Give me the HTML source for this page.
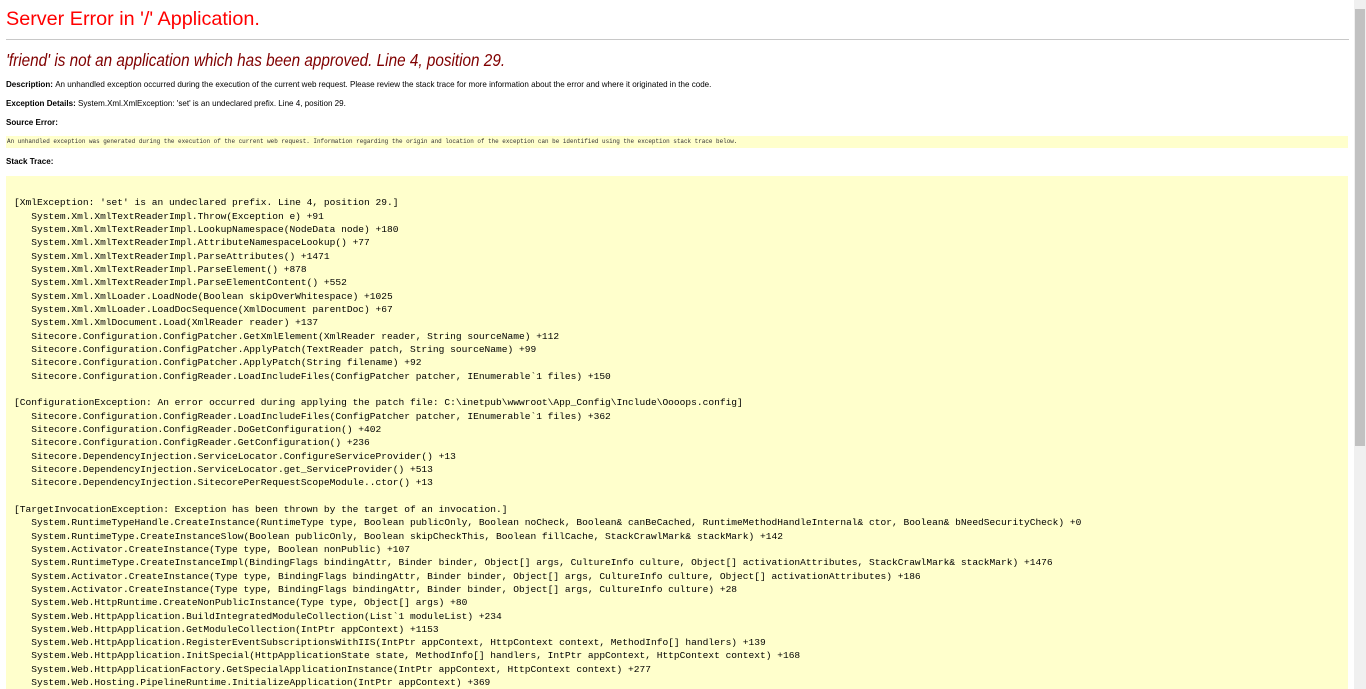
<!DOCTYPE html>
<html><head><meta charset="utf-8"><style>
html,body{margin:0;padding:0;background:#fff;overflow:hidden}
body{width:1366px;height:689px;position:relative;font-family:"Liberation Sans",Arial,sans-serif;color:#000}
.a{position:absolute;white-space:nowrap}
h1{position:absolute;left:6px;top:8px;margin:0;font-weight:normal;font-size:19.8px;color:#f00}
hr{position:absolute;left:6px;top:39px;width:1343px;margin:0;border:0;border-top:1px solid #c8c8c8}
h2{position:absolute;left:6px;top:51px;margin:0;font-weight:normal;font-style:italic;font-size:15.3px;color:#800000;transform:scaleY(1.15);transform-origin:0 0;white-space:nowrap}
.s{font-size:8.05px}
.src{position:absolute;left:6px;top:136px;width:1342px;height:12px;background:#ffffcc;font-family:"Liberation Mono",monospace;font-size:5.94px;line-height:12px;white-space:nowrap;color:#333;padding-left:1px;box-sizing:border-box}
pre{position:absolute;left:6px;top:176px;width:1342px;height:513px;overflow:hidden;margin:0;box-sizing:border-box;padding:7px 8px;background:#ffffcc;font-family:"Liberation Mono",monospace;font-size:9.57px;line-height:13.33px;color:#000}
.sb{position:absolute;left:1354px;top:0;width:12px;height:689px;background:#f0f0f0}
.th{position:absolute;left:1355px;top:9px;width:10px;height:437px;background:#c1c1c1}
</style></head><body>
<h1>Server Error in '/' Application.</h1>
<hr>
<h2>'friend' is not an application which has been approved. Line 4, position 29.</h2>
<div class="a s" style="left:6px;top:80px"><b>Description: </b>An unhandled exception occurred during the execution of the current web request. Please review the stack trace for more information about the error and where it originated in the code.</div>
<div class="a s" style="left:6px;top:99px"><b>Exception Details: </b>System.Xml.XmlException: 'set' is an undeclared prefix. Line 4, position 29.</div>
<div class="a s" style="left:6px;top:118px"><b>Source Error:</b></div>
<div class="src">An unhandled exception was generated during the execution of the current web request. Information regarding the origin and location of the exception can be identified using the exception stack trace below.</div>
<div class="a s" style="left:6px;top:157px"><b>Stack Trace:</b></div>
<pre>

[XmlException: 'set' is an undeclared prefix. Line 4, position 29.]
   System.Xml.XmlTextReaderImpl.Throw(Exception e) +91
   System.Xml.XmlTextReaderImpl.LookupNamespace(NodeData node) +180
   System.Xml.XmlTextReaderImpl.AttributeNamespaceLookup() +77
   System.Xml.XmlTextReaderImpl.ParseAttributes() +1471
   System.Xml.XmlTextReaderImpl.ParseElement() +878
   System.Xml.XmlTextReaderImpl.ParseElementContent() +552
   System.Xml.XmlLoader.LoadNode(Boolean skipOverWhitespace) +1025
   System.Xml.XmlLoader.LoadDocSequence(XmlDocument parentDoc) +67
   System.Xml.XmlDocument.Load(XmlReader reader) +137
   Sitecore.Configuration.ConfigPatcher.GetXmlElement(XmlReader reader, String sourceName) +112
   Sitecore.Configuration.ConfigPatcher.ApplyPatch(TextReader patch, String sourceName) +99
   Sitecore.Configuration.ConfigPatcher.ApplyPatch(String filename) +92
   Sitecore.Configuration.ConfigReader.LoadIncludeFiles(ConfigPatcher patcher, IEnumerable`1 files) +150

[ConfigurationException: An error occurred during applying the patch file: C:\inetpub\wwwroot\App_Config\Include\Oooops.config]
   Sitecore.Configuration.ConfigReader.LoadIncludeFiles(ConfigPatcher patcher, IEnumerable`1 files) +362
   Sitecore.Configuration.ConfigReader.DoGetConfiguration() +402
   Sitecore.Configuration.ConfigReader.GetConfiguration() +236
   Sitecore.DependencyInjection.ServiceLocator.ConfigureServiceProvider() +13
   Sitecore.DependencyInjection.ServiceLocator.get_ServiceProvider() +513
   Sitecore.DependencyInjection.SitecorePerRequestScopeModule..ctor() +13

[TargetInvocationException: Exception has been thrown by the target of an invocation.]
   System.RuntimeTypeHandle.CreateInstance(RuntimeType type, Boolean publicOnly, Boolean noCheck, Boolean&amp; canBeCached, RuntimeMethodHandleInternal&amp; ctor, Boolean&amp; bNeedSecurityCheck) +0
   System.RuntimeType.CreateInstanceSlow(Boolean publicOnly, Boolean skipCheckThis, Boolean fillCache, StackCrawlMark&amp; stackMark) +142
   System.Activator.CreateInstance(Type type, Boolean nonPublic) +107
   System.RuntimeType.CreateInstanceImpl(BindingFlags bindingAttr, Binder binder, Object[] args, CultureInfo culture, Object[] activationAttributes, StackCrawlMark&amp; stackMark) +1476
   System.Activator.CreateInstance(Type type, BindingFlags bindingAttr, Binder binder, Object[] args, CultureInfo culture, Object[] activationAttributes) +186
   System.Activator.CreateInstance(Type type, BindingFlags bindingAttr, Binder binder, Object[] args, CultureInfo culture) +28
   System.Web.HttpRuntime.CreateNonPublicInstance(Type type, Object[] args) +80
   System.Web.HttpApplication.BuildIntegratedModuleCollection(List`1 moduleList) +234
   System.Web.HttpApplication.GetModuleCollection(IntPtr appContext) +1153
   System.Web.HttpApplication.RegisterEventSubscriptionsWithIIS(IntPtr appContext, HttpContext context, MethodInfo[] handlers) +139
   System.Web.HttpApplication.InitSpecial(HttpApplicationState state, MethodInfo[] handlers, IntPtr appContext, HttpContext context) +168
   System.Web.HttpApplicationFactory.GetSpecialApplicationInstance(IntPtr appContext, HttpContext context) +277
   System.Web.Hosting.PipelineRuntime.InitializeApplication(IntPtr appContext) +369
</pre>
<div class="sb"></div><div class="th"></div>
</body></html>
